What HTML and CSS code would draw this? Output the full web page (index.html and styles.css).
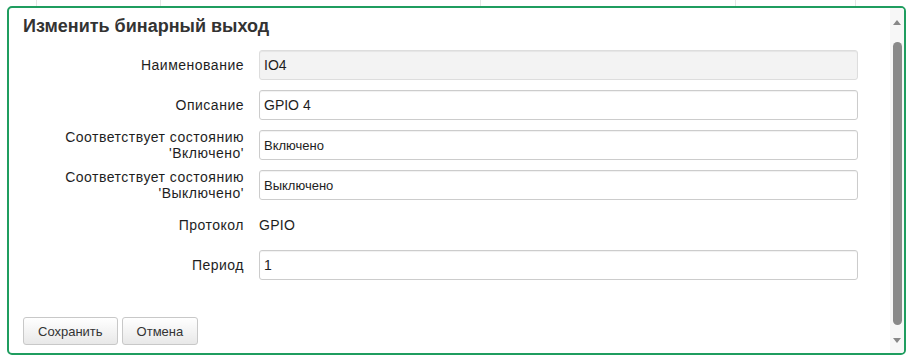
FILE: index.html
```html
<!DOCTYPE html>
<html lang="ru">
<head>
    <meta charset="UTF-8">
    <title>Изменить бинарный выход</title>
    <link rel="stylesheet" href="styles.css">
</head>
<body>
    <div class="backdrop">
        <div class="dialog">
            <div class="dialog-body">
                <h2>Изменить бинарный выход</h2>
                <form class="edit-form">
                    <label for="name">Наименование</label>
                    <input type="text" id="name" value="IO4" readonly class="readonly">
                    <label for="descr">Описание</label>
                    <input type="text" id="descr" value="GPIO 4">
                    <label for="on_state">Соответствует состоянию<br>'Включено'</label>
                    <input type="text" id="on_state" value="Включено" class="small">
                    <label for="off_state">Соответствует состоянию<br>'Выключено'</label>
                    <input type="text" id="off_state" value="Выключено" class="small">
                    <label>Протокол</label>
                    <span class="value">GPIO</span>
                    <label for="period">Период</label>
                    <input type="text" id="period" value="1">
                </form>
                <div class="btn-container">
                    <button type="button">Сохранить</button>
                    <button type="button">Отмена</button>
                </div>
            </div>
            <div class="scrollbar">
                <span class="arrow up"></span>
                <span class="thumb"></span>
                <span class="arrow down"></span>
            </div>
        </div>
    </div>
</body>
</html>
```

FILE: styles.css
```css
body {
    font-family: Arial, "Liberation Sans", sans-serif;
    background-color: #fff;
    margin: 0;
    padding: 0;
    color: #333;
}
.backdrop {
    height: 362px;
    box-sizing: border-box;
    padding: 6px 7px 7px 7px;
    background:
        linear-gradient(#e6e6e6, #e6e6e6) 36px 0 / 1px 6px no-repeat,
        linear-gradient(#e6e6e6, #e6e6e6) 160px 0 / 1px 6px no-repeat,
        linear-gradient(#e6e6e6, #e6e6e6) 480px 0 / 1px 6px no-repeat,
        linear-gradient(#e6e6e6, #e6e6e6) 735px 0 / 1px 6px no-repeat,
        linear-gradient(#e6e6e6, #e6e6e6) 855px 0 / 1px 6px no-repeat,
        #fff;
}
.dialog {
    display: flex;
    height: 349px;
    box-sizing: border-box;
    border: 2px solid #1f9d5f;
    border-radius: 5px;
    background-color: #fff;
    overflow: hidden;
}
.dialog-body {
    flex: 1;
    padding: 8px 32px 0 14px;
}
h2 {
    margin: 0 0 13px 0;
    font-size: 18px;
    line-height: 21px;
    font-weight: bold;
    color: #333;
}
.edit-form {
    display: grid;
    grid-template-columns: 221px 1fr;
    grid-auto-rows: 30px;
    column-gap: 15px;
    row-gap: 10px;
    align-items: center;
}
.edit-form label {
    text-align: right;
    font-size: 14px;
    line-height: 16px;
    letter-spacing: 0.5px;
    color: #1e1e1e;
}
.edit-form .value {
    font-size: 14px;
    letter-spacing: 0.3px;
    color: #1e1e1e;
}
input[type="text"] {
    height: 30px;
    box-sizing: border-box;
    padding: 0 4px;
    border: 1px solid #ccc;
    border-radius: 3px;
    font-family: inherit;
    font-size: 14px;
    color: #1e1e1e;
    background-color: #fff;
    box-shadow: inset 0 1px 1px rgba(0, 0, 0, 0.06);
}
input.readonly {
    background-color: #f3f3f3;
    border-color: #ddd;
}
input.small {
    font-size: 13px;
}
.btn-container {
    display: flex;
    gap: 4px;
    margin-top: 37px;
}
button {
    height: 28px;
    padding: 0 14px;
    font-family: inherit;
    font-size: 13px;
    color: #333;
    background: linear-gradient(#fff, #e8e8e8);
    border: 1px solid #c8c8c8;
    border-radius: 3px;
    cursor: pointer;
}
button:hover {
    background: linear-gradient(#fff, #dcdcdc);
}
.scrollbar {
    width: 14px;
    background-color: #f7f7f7;
    display: flex;
    flex-direction: column;
    align-items: center;
    padding: 12px 0 10px 0;
}
.arrow {
    width: 0;
    height: 0;
    border-left: 4px solid transparent;
    border-right: 4px solid transparent;
}
.arrow.up {
    border-bottom: 5px solid #888;
}
.arrow.down {
    border-top: 5px solid #888;
}
.thumb {
    width: 9px;
    flex: 1;
    margin: 17px 0 13px 0;
    background-color: #8a8a8a;
    border-radius: 5px;
}
```
